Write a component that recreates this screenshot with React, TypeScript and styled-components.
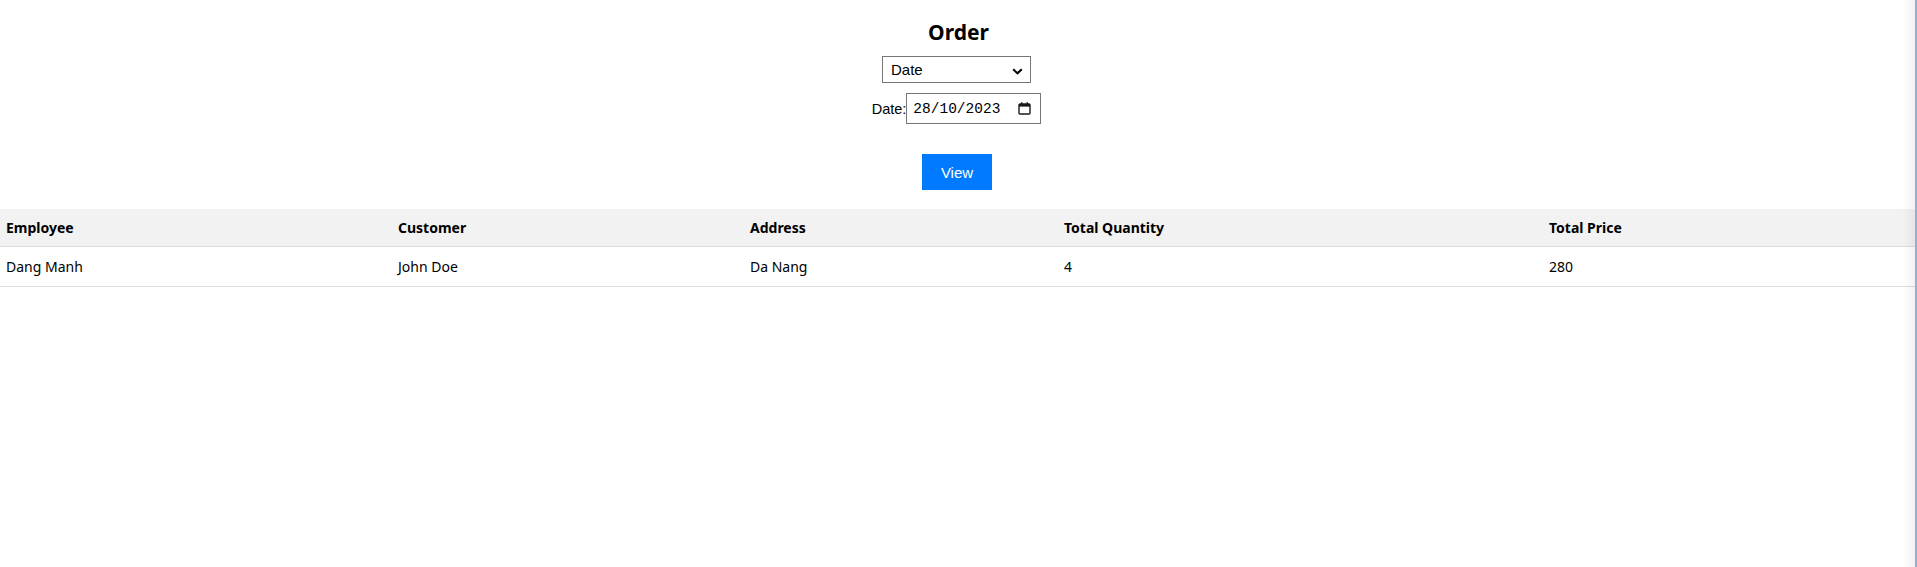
import React from "react";
import styled, { createGlobalStyle } from "styled-components";

const GlobalStyle = createGlobalStyle`
  html, body {
    margin: 0;
    padding: 0;
    background: #ffffff;
  }
  body {
    font-family: "Noto Sans", "Open Sans", sans-serif;
    color: #000;
  }
`;

const Page = styled.div`
  display: flex;
  flex-direction: column;
  align-items: center;
  padding-top: 17px;
`;

const Title = styled.h2`
  margin: 0;
  font-family: "Noto Sans", sans-serif;
  font-size: 21px;
  font-weight: 700;
  line-height: 30px;
  color: #000;
`;

const Filters = styled.div`
  display: flex;
  flex-direction: column;
  align-items: center;
  gap: 10px;
  margin-top: 9px;
`;

const SelectWrap = styled.div`
  position: relative;
  width: 149px;
  height: 27px;
  margin-left: -4px;
`;

const Select = styled.select`
  appearance: none;
  -webkit-appearance: none;
  box-sizing: border-box;
  width: 100%;
  height: 100%;
  border: 1px solid #767676;
  border-radius: 0;
  background: #fff;
  font-family: "Liberation Sans", Arial, sans-serif;
  font-size: 15px;
  color: #000;
  padding: 0 0 0 8px;
  margin: 0;
  outline: none;
`;

const Chevron = styled.svg`
  position: absolute;
  right: 8px;
  top: 12px;
  width: 11px;
  height: 7px;
  pointer-events: none;
`;

const DateRow = styled.div`
  display: flex;
  align-items: center;
  margin-left: -4px;
`;

const Label = styled.label`
  font-family: "Liberation Sans", Arial, sans-serif;
  font-size: 14.5px;
  color: #000;
`;

const DateBox = styled.div`
  box-sizing: border-box;
  display: flex;
  align-items: center;
  width: 135px;
  height: 31px;
  border: 1px solid #767676;
  background: #fff;
  padding: 0 9px 0 6px;
`;

const DateText = styled.input`
  flex: 1;
  min-width: 0;
  border: none;
  outline: none;
  padding: 0;
  margin: 0;
  background: transparent;
  font-family: "Liberation Mono", monospace;
  font-size: 14.5px;
  color: #000;
`;

const CalendarIcon = styled.svg`
  flex: none;
  width: 13px;
  height: 13px;
`;

const ViewButton = styled.button`
  margin-top: 30px;
  width: 70px;
  height: 36px;
  border: none;
  background: #007bff;
  color: #fff;
  font-family: "Liberation Sans", Arial, sans-serif;
  font-size: 15px;
  cursor: pointer;
  margin-left: -3px;
`;

const Table = styled.table`
  align-self: flex-start;
  margin-top: 19px;
  width: 1916px;
  border-collapse: collapse;
  table-layout: fixed;
  font-family: "Noto Sans", sans-serif;
  font-size: 14px;
`;

const Th = styled.th`
  background: #f2f2f2;
  text-align: left;
  font-weight: 700;
  height: 37px;
  padding: 0 6px;
  border-bottom: 1px solid #dddddd;
  color: #000;
`;

const Td = styled.td`
  height: 39px;
  padding: 0 6px;
  border-bottom: 1px solid #dddddd;
  color: #000;
`;

const EdgeShadow = styled.div`
  position: fixed;
  top: 0;
  right: 0;
  bottom: 0;
  width: 12px;
  background: linear-gradient(to right, rgba(0, 0, 0, 0), rgba(0, 0, 0, 0.05));
  border-right: 2px solid #8db2d9;
  pointer-events: none;
`;

const columns = [
  { label: "Employee", width: 392 },
  { label: "Customer", width: 352 },
  { label: "Address", width: 314 },
  { label: "Total Quantity", width: 485 },
  { label: "Total Price", width: 373 },
];

const rows = [["Dang Manh", "John Doe", "Da Nang", "4", "280"]];

export default function App() {
  return (
    <>
      <GlobalStyle />
      <Page>
        <Title>Order</Title>
        <Filters>
          <SelectWrap>
            <Select defaultValue="date">
              <option value="date">Date</option>
              <option value="month">Month</option>
              <option value="year">Year</option>
            </Select>
            <Chevron viewBox="0 0 11 7">
              <path d="M1.2 1.2 L5.5 5.3 L9.8 1.2" fill="none" stroke="#000" strokeWidth="2" />
            </Chevron>
          </SelectWrap>
          <DateRow>
            <Label htmlFor="date">Date:</Label>
            <DateBox>
              <DateText id="date" type="text" readOnly defaultValue="28/10/2023" />
              <CalendarIcon viewBox="0 0 13 13">
                <rect x="1" y="2" width="11" height="10" rx="1" fill="none" stroke="#1a1a1a" strokeWidth="1.4" />
                <rect x="1" y="2" width="11" height="2.6" fill="#1a1a1a" />
                <rect x="3" y="0.3" width="1.5" height="2.5" fill="#1a1a1a" />
                <rect x="8.5" y="0.3" width="1.5" height="2.5" fill="#1a1a1a" />
              </CalendarIcon>
            </DateBox>
          </DateRow>
        </Filters>
        <ViewButton>View</ViewButton>
        <Table>
          <colgroup>
            {columns.map((c) => (
              <col key={c.label} style={{ width: c.width }} />
            ))}
          </colgroup>
          <thead>
            <tr>
              {columns.map((c) => (
                <Th key={c.label}>{c.label}</Th>
              ))}
            </tr>
          </thead>
          <tbody>
            {rows.map((r, i) => (
              <tr key={i}>
                {r.map((v, j) => (
                  <Td key={j}>{v}</Td>
                ))}
              </tr>
            ))}
          </tbody>
        </Table>
      </Page>
      <EdgeShadow />
    </>
  );
}
